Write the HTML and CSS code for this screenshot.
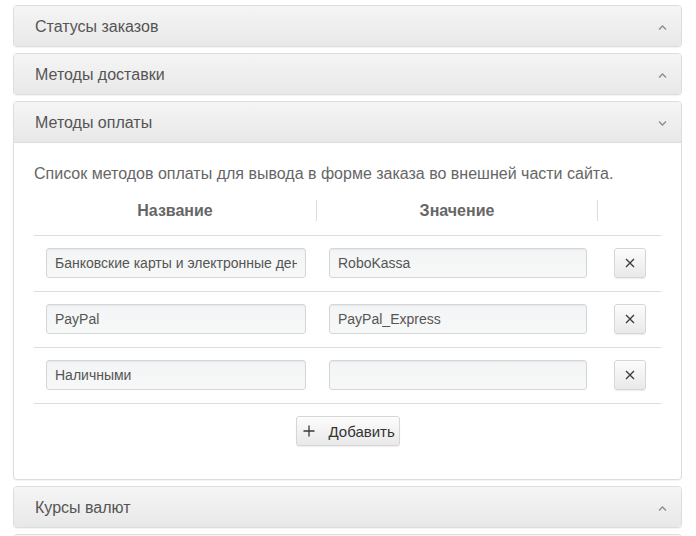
FILE: index.html
```html
<!DOCTYPE html>
<html lang="ru">
<head>
<meta charset="utf-8">
<title>Настройки</title>
<link rel="stylesheet" href="styles.css">
</head>
<body>
<div class="panel">
  <div class="panel-heading">
    <span class="title">Статусы заказов</span>
    <svg class="chev" width="9" height="5" viewBox="0 0 9 5"><polyline points="1,4.5 4.5,1 8,4.5"/></svg>
  </div>
</div>
<div class="panel">
  <div class="panel-heading">
    <span class="title">Методы доставки</span>
    <svg class="chev" width="9" height="5" viewBox="0 0 9 5"><polyline points="1,4.5 4.5,1 8,4.5"/></svg>
  </div>
</div>
<div class="panel">
  <div class="panel-heading open">
    <span class="title">Методы оплаты</span>
    <svg class="chev" width="9" height="5" viewBox="0 0 9 5"><polyline points="1,0.5 4.5,4 8,0.5"/></svg>
  </div>
  <div class="panel-body">
    <p class="desc">Список методов оплаты для вывода в форме заказа во внешней части сайта.</p>
    <div class="grid">
      <div class="th"><div class="th-in">Название</div></div>
      <div class="th"><div class="th-in">Значение</div></div>
      <div class="th"><div class="th-in last"></div></div>

      <div class="td"><input class="field" type="text" value="Банковские карты и электронные деньги"></div>
      <div class="td"><input class="field" type="text" value="RoboKassa"></div>
      <div class="td act"><button class="btn btn-x" type="button"><svg width="10" height="10" viewBox="0 0 10 10"><path d="M1 1L9 9M9 1L1 9"/></svg></button></div>

      <div class="td"><input class="field" type="text" value="PayPal"></div>
      <div class="td"><input class="field" type="text" value="PayPal_Express"></div>
      <div class="td act"><button class="btn btn-x" type="button"><svg width="10" height="10" viewBox="0 0 10 10"><path d="M1 1L9 9M9 1L1 9"/></svg></button></div>

      <div class="td"><input class="field" type="text" value="Наличными"></div>
      <div class="td"><input class="field" type="text" value=""></div>
      <div class="td act"><button class="btn btn-x" type="button"><svg width="10" height="10" viewBox="0 0 10 10"><path d="M1 1L9 9M9 1L1 9"/></svg></button></div>
    </div>
    <div class="add-wrap">
      <button class="btn btn-add" type="button"><svg width="12" height="12" viewBox="0 0 12 12"><path d="M6 0.5V11.5M0.5 6H11.5"/></svg><span>Добавить</span></button>
    </div>
  </div>
</div>
<div class="panel">
  <div class="panel-heading">
    <span class="title">Курсы валют</span>
    <svg class="chev" width="9" height="5" viewBox="0 0 9 5"><polyline points="1,4.5 4.5,1 8,4.5"/></svg>
  </div>
</div>
<div class="panel">
  <div class="panel-heading"></div>
</div>
</body>
</html>
```

FILE: styles.css
```css
html, body {
  margin: 0;
  background: #fff;
}
body {
  padding: 5px 14px 0 13px;
  font-family: "Liberation Sans", Arial, sans-serif;
  font-size: 14px;
  color: #333;
  overflow: hidden;
  height: 536px;
  box-sizing: border-box;
}
.panel {
  border: 1px solid #ddd;
  border-radius: 4px;
  margin-bottom: 6px;
  background: #fff;
  box-shadow: 0 1px 1px rgba(0,0,0,.05);
}
.panel-heading {
  display: flex;
  align-items: center;
  justify-content: space-between;
  height: 38px;
  padding: 2px 14px 0 21px;
  background: linear-gradient(to bottom, #f5f5f5 0, #e8e8e8 100%);
  border-radius: 3px;
}
.panel-heading.open {
  border-bottom: 1px solid #ddd;
  border-radius: 3px 3px 0 0;
}
.title {
  font-size: 16px;
  color: #555;
  line-height: 20px;
}
.chev polyline {
  fill: none;
  stroke: #8a8f96;
  stroke-width: 1.4;
}
.panel-body {
  padding: 20px 20px 20px;
}
.desc {
  margin: 0 0 7px;
  font-size: 16px;
  line-height: 21px;
  color: #666;
}
.grid {
  display: grid;
  grid-template-columns: 283px 281px 1fr;
}
.th {
  padding: 9px 0 14px;
  border-bottom: 1px solid #ddd;
}
.th-in {
  height: 21px;
  line-height: 21px;
  text-align: center;
  font-weight: bold;
  font-size: 16px;
  color: #666;
  border-right: 1px solid #ddd;
}
.th-in.last {
  border-right: none;
}
.td {
  padding: 12px 11px 13px 12px;
  border-bottom: 1px solid #ddd;
}
.td.act {
  display: flex;
  justify-content: center;
  padding-left: 0;
  padding-right: 0;
}
.field {
  display: block;
  box-sizing: border-box;
  width: 100%;
  height: 30px;
  margin: 0;
  padding: 0 8px;
  font-family: "Liberation Sans", Arial, sans-serif;
  font-size: 14px;
  color: #555;
  background: linear-gradient(to bottom, #f3f4f5 0, #f7f8f8 100%);
  border: 1px solid #d4d6d8;
  border-radius: 3px;
  box-shadow: inset 0 1px 1px rgba(0,0,0,.05);
  outline: none;
}
.btn {
  display: inline-flex;
  align-items: center;
  justify-content: center;
  box-sizing: border-box;
  height: 30px;
  margin: 0;
  padding: 0;
  font-family: "Liberation Sans", Arial, sans-serif;
  font-size: 14px;
  color: #333;
  background: linear-gradient(to bottom, #fcfcfc 0, #e9e9e9 100%);
  border: 1px solid #d6d6d6;
  border-radius: 3px;
  box-shadow: 0 1px 1px rgba(0,0,0,.08);
  cursor: pointer;
}
.btn svg path {
  fill: none;
  stroke: #3a3a3a;
  stroke-width: 1.3;
}
.btn-x {
  width: 32px;
}
.add-wrap {
  display: flex;
  justify-content: center;
  padding: 12px 0 13px;
}
.btn-add {
  width: 104px;
  gap: 14px;
  padding-left: 6px;
  justify-content: flex-start;
  font-size: 15px;
}
.btn-add svg path {
  stroke-width: 1.3;
}
```
